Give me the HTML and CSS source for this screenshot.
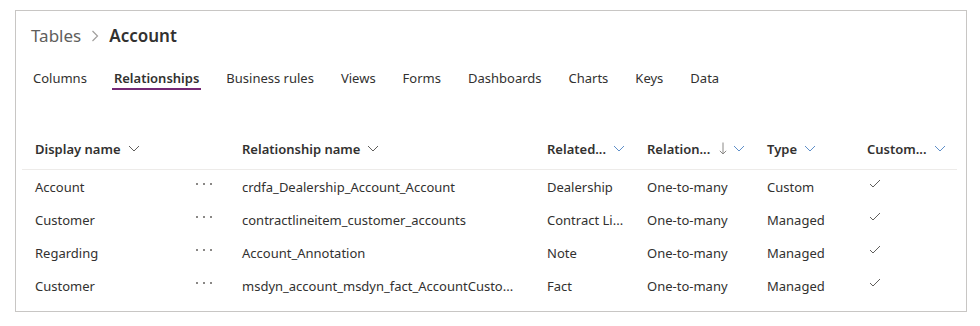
FILE: index.html
```html
<!DOCTYPE html>
<html lang="en">
<head>
  <meta charset="UTF-8">
  <meta name="viewport" content="width=device-width, initial-scale=1.0">
  <title>Account - Relationships</title>
  <link rel="stylesheet" href="styles.css">
</head>
<body>
  <div class="card">
    <h1 class="crumb">
      <span class="crumb-root">Tables</span>
      <svg class="crumb-sep" width="8" height="12" viewBox="0 0 8 12"><path d="M1.5 1 L6.5 6 L1.5 11" fill="none" stroke="#a19f9d" stroke-width="1.2"/></svg>
      <span class="crumb-cur">Account</span>
    </h1>

    <nav class="tabs">
      <a href="javascript:;" class="tab">Columns</a>
      <a href="javascript:;" class="tab active">Relationships</a>
      <a href="javascript:;" class="tab">Business rules</a>
      <a href="javascript:;" class="tab">Views</a>
      <a href="javascript:;" class="tab">Forms</a>
      <a href="javascript:;" class="tab">Dashboards</a>
      <a href="javascript:;" class="tab">Charts</a>
      <a href="javascript:;" class="tab">Keys</a>
      <a href="javascript:;" class="tab">Data</a>
    </nav>

    <div class="grid">
      <div class="row head">
        <div class="cell">Display name <svg class="chev" width="12" height="7" viewBox="0 0 12 7"><path d="M1 1 L6 6 L11 1" fill="none" stroke="#605e5c" stroke-width="1"/></svg></div>
        <div class="cell"></div>
        <div class="cell">Relationship name <svg class="chev" width="12" height="7" viewBox="0 0 12 7"><path d="M1 1 L6 6 L11 1" fill="none" stroke="#605e5c" stroke-width="1"/></svg></div>
        <div class="cell">Related... <svg class="chev blue" width="12" height="7" viewBox="0 0 12 7"><path d="M1 1 L6 6 L11 1" fill="none" stroke="#5f8fc9" stroke-width="1"/></svg></div>
        <div class="cell">Relation... <svg class="sort" width="8" height="13" viewBox="0 0 8 13"><path d="M4 0.5 V12 M0.8 8.8 L4 12 L7.2 8.8" fill="none" stroke="#8a8886" stroke-width="1"/></svg><svg class="chev blue" width="12" height="7" viewBox="0 0 12 7"><path d="M1 1 L6 6 L11 1" fill="none" stroke="#5f8fc9" stroke-width="1"/></svg></div>
        <div class="cell">Type <svg class="chev blue" width="12" height="7" viewBox="0 0 12 7"><path d="M1 1 L6 6 L11 1" fill="none" stroke="#5f8fc9" stroke-width="1"/></svg></div>
        <div class="cell">Custom... <svg class="chev blue" width="12" height="7" viewBox="0 0 12 7"><path d="M1 1 L6 6 L11 1" fill="none" stroke="#5f8fc9" stroke-width="1"/></svg></div>
      </div>

      <div class="row">
        <div class="cell">Account</div>
        <div class="cell more"><svg width="16" height="2" viewBox="0 0 16 2"><rect x="0" width="2" height="2" fill="#8a8886"/><rect x="7" width="2" height="2" fill="#8a8886"/><rect x="14" width="2" height="2" fill="#8a8886"/></svg></div>
        <div class="cell">crdfa_Dealership_Account_Account</div>
        <div class="cell">Dealership</div>
        <div class="cell">One-to-many</div>
        <div class="cell">Custom</div>
        <div class="cell"><svg class="check" width="12" height="9" viewBox="0 0 12 9"><path d="M1 5 L4 8 L11 1" fill="none" stroke="#605e5c" stroke-width="1"/></svg></div>
      </div>
      <div class="row">
        <div class="cell">Customer</div>
        <div class="cell more"><svg width="16" height="2" viewBox="0 0 16 2"><rect x="0" width="2" height="2" fill="#8a8886"/><rect x="7" width="2" height="2" fill="#8a8886"/><rect x="14" width="2" height="2" fill="#8a8886"/></svg></div>
        <div class="cell">contractlineitem_customer_accounts</div>
        <div class="cell">Contract Li...</div>
        <div class="cell">One-to-many</div>
        <div class="cell">Managed</div>
        <div class="cell"><svg class="check" width="12" height="9" viewBox="0 0 12 9"><path d="M1 5 L4 8 L11 1" fill="none" stroke="#605e5c" stroke-width="1"/></svg></div>
      </div>
      <div class="row">
        <div class="cell">Regarding</div>
        <div class="cell more"><svg width="16" height="2" viewBox="0 0 16 2"><rect x="0" width="2" height="2" fill="#8a8886"/><rect x="7" width="2" height="2" fill="#8a8886"/><rect x="14" width="2" height="2" fill="#8a8886"/></svg></div>
        <div class="cell">Account_Annotation</div>
        <div class="cell">Note</div>
        <div class="cell">One-to-many</div>
        <div class="cell">Managed</div>
        <div class="cell"><svg class="check" width="12" height="9" viewBox="0 0 12 9"><path d="M1 5 L4 8 L11 1" fill="none" stroke="#605e5c" stroke-width="1"/></svg></div>
      </div>
      <div class="row">
        <div class="cell">Customer</div>
        <div class="cell more"><svg width="16" height="2" viewBox="0 0 16 2"><rect x="0" width="2" height="2" fill="#8a8886"/><rect x="7" width="2" height="2" fill="#8a8886"/><rect x="14" width="2" height="2" fill="#8a8886"/></svg></div>
        <div class="cell">msdyn_account_msdyn_fact_AccountCusto...</div>
        <div class="cell">Fact</div>
        <div class="cell">One-to-many</div>
        <div class="cell">Managed</div>
        <div class="cell"><svg class="check" width="12" height="9" viewBox="0 0 12 9"><path d="M1 5 L4 8 L11 1" fill="none" stroke="#605e5c" stroke-width="1"/></svg></div>
      </div>
    </div>
  </div>
</body>
</html>
```

FILE: styles.css
```css
*{
  padding: 0;
  margin: 0;
  box-sizing: border-box;
}
body{
  background-color: #fff;
  font-family: "Noto Sans", "Open Sans", sans-serif;
  color: #323130;
  font-size: 13px;
}
a{
  text-decoration: none;
  color: #323130;
}
.card{
  width: 952px;
  height: 302px;
  margin: 10px 0 0 15px;
  border: 1px solid #c8c6c4;
  padding: 11px 9px 0 6px;
}
.crumb{
  display: flex;
  align-items: center;
  height: 28px;
  padding-left: 9px;
  font-size: 17px;
  font-weight: 400;
  line-height: 28px;
}
.crumb-root{
  color: #605e5c;
}
.crumb-sep{
  margin: 0 10px 0 10px;
}
.crumb-cur{
  font-weight: 600;
  color: #323130;
}
.tabs{
  display: flex;
  gap: 23px;
  margin-top: 18px;
  padding-left: 9px;
}
.tab{
  padding: 0 2px;
  line-height: 20px;
  border-bottom: 2px solid transparent;
  font-size: 13px;
}
.tab.active{
  font-weight: 600;
  border-bottom-color: #742774;
}
.grid{
  margin-top: 38px;
}
.row{
  display: grid;
  grid-template-columns: 157px 50px 305px 100px 120px 100px 101px;
  height: 33px;
  align-items: center;
}
.row.head{
  height: 42px;
  border-bottom: 1px solid #edebe9;
  font-weight: 600;
}
.cell{
  display: flex;
  align-items: center;
  padding-left: 13px;
  white-space: nowrap;
  overflow: hidden;
}
.chev{
  margin-left: 7px;
  flex: none;
}
.sort{
  margin-left: 9px;
  margin-right: 6px;
  flex: none;
}
.sort + .chev{
  margin-left: 0;
}
.cell.more{
  justify-content: center;
  padding-left: 0;
  padding-bottom: 6px;
}
.check{
  margin-left: 2px;
  margin-bottom: 6px;
}
```
